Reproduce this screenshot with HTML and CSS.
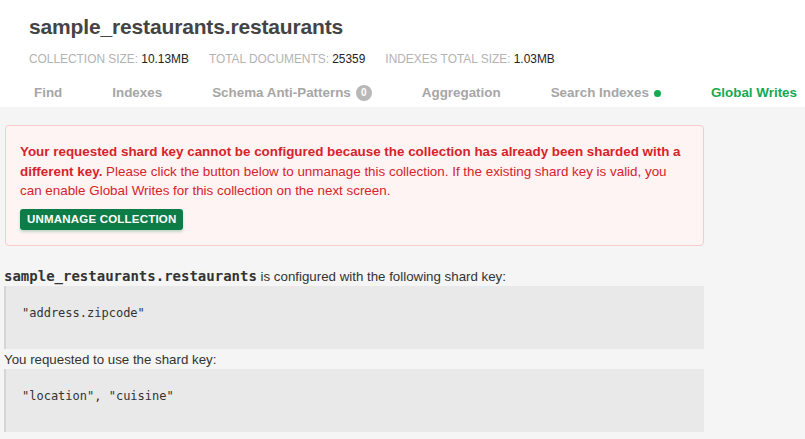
FILE: index.html
```html
<!DOCTYPE html>
<html>
<head>
<meta charset="utf-8">
<link rel="stylesheet" href="styles.css">
</head>
<body>
<header class="header">
  <h1 class="title">sample_restaurants.restaurants</h1>
  <div class="stats">
    <span class="stat"><span class="stat-label">Collection size:</span> 10.13MB</span>
    <span class="stat"><span class="stat-label">Total documents:</span> 25359</span>
    <span class="stat"><span class="stat-label">Indexes total size:</span> 1.03MB</span>
  </div>
  <nav class="tabs">
    <span class="tab">Find</span>
    <span class="tab">Indexes</span>
    <span class="tab">Schema Anti-Patterns <span class="badge">0</span></span>
    <span class="tab">Aggregation</span>
    <span class="tab">Search Indexes <span class="dot"></span></span>
    <span class="tab tab-active">Global Writes</span>
  </nav>
</header>
<main class="main">
  <div class="content">
    <div class="alert">
      <p class="alert-text"><strong>Your requested shard key cannot be configured because the collection has already been sharded with a</strong> <strong>different key.</strong> Please click the button below to unmanage this collection. If the existing shard key is valid, you can enable Global Writes for this collection on the next screen.</p>
      <button class="btn">Unmanage collection</button>
    </div>
    <p class="line"><code class="ns">sample_restaurants.restaurants</code> is configured with the following shard key:</p>
    <pre class="code">"address.zipcode"</pre>
    <p class="line line-tight">You requested to use the shard key:</p>
    <pre class="code">"location", "cuisine"</pre>
  </div>
</main>
</body>
</html>
```
FILE: styles.css
```css
html, body {
  margin: 0;
  padding: 0;
}
body {
  font-family: "Liberation Sans", Arial, sans-serif;
  background: #f4f5f4;
  height: 439px;
  overflow: hidden;
  display: flex;
  flex-direction: column;
}
.header {
  background: #fff;
  padding: 14px 0 0 0;
  height: 107px;
  box-sizing: border-box;
  flex: none;
  overflow: hidden;
}
.title {
  margin: 0 0 0 29px;
  font-size: 21px;
  font-weight: bold;
  color: #444;
  line-height: 26px;
  letter-spacing: -0.15px;
}
.stats {
  margin: 12px 0 0 29px;
  display: flex;
  gap: 20px;
  font-size: 11.9px;
  line-height: 14px;
  color: #222;
}
.stat-label {
  text-transform: uppercase;
  color: #b3b3b3;
}
.tabs {
  display: flex;
  margin: 19px 0 0 9px;
  white-space: nowrap;
  font-size: 13.4px;
  font-weight: bold;
  line-height: 16px;
  color: #a6a6a6;
}
.tab {
  padding: 0 25px;
  display: flex;
  align-items: center;
  gap: 5px;
}
.tab-active {
  color: #13aa52;
}
.badge {
  display: inline-flex;
  align-items: center;
  justify-content: center;
  width: 16px;
  height: 16px;
  border-radius: 50%;
  background: #b8b8b8;
  color: #fff;
  font-size: 10px;
  line-height: 1;
}
.dot {
  width: 7px;
  height: 7px;
  border-radius: 50%;
  background: #13aa52;
}
.main {
  flex: 1;
}
.content {
  width: 700px;
  margin-left: 4px;
  padding-top: 18px;
}
.alert {
  margin-left: 1px;
  background: #fff4f4;
  border: 1px solid #f8cccc;
  border-radius: 4px;
  padding: 16px 15px 15px 14px;
}
.alert-text {
  margin: 0;
  color: #d6232a;
  font-size: 13.4px;
  line-height: 19.5px;
}
.btn {
  margin-top: 8px;
  background: #0d7c46;
  color: #fff;
  border: none;
  border-radius: 3px;
  font-family: "Liberation Sans", Arial, sans-serif;
  font-weight: bold;
  font-size: 11.5px;
  letter-spacing: 0.2px;
  text-transform: uppercase;
  padding: 0 7px;
  height: 21px;
  line-height: 21px;
  box-shadow: 0 2px 3px rgba(13, 124, 70, 0.25);
}
.line {
  margin: 22px 0 1px 0;
  font-size: 13.3px;
  line-height: 17px;
  color: #333;
}
.line-tight {
  margin-top: 2px;
}
.ns {
  font-family: "DejaVu Sans Mono", monospace;
  font-weight: bold;
  font-size: 14px;
  color: #333;
}
.code {
  margin: 0;
  background: #e8e9e8;
  border-left: 2px solid #d4d5d4;
  height: 63px;
  box-sizing: border-box;
  padding: 19px 16px 0 16px;
  font-family: "DejaVu Sans Mono", monospace;
  font-size: 12px;
  line-height: 17px;
  color: #333;
}
```
